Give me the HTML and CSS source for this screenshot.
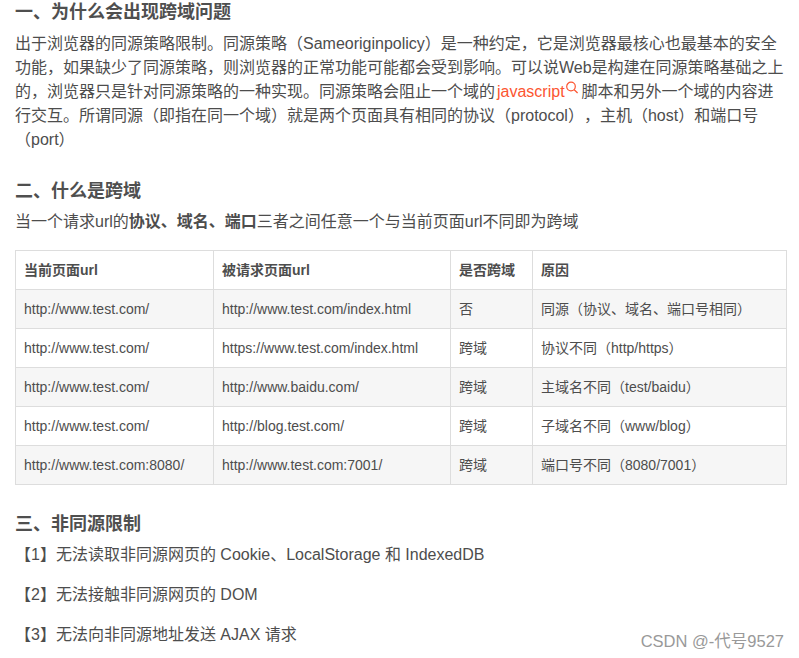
FILE: index.html
```html
<!DOCTYPE html>
<html lang="zh-CN">
<head>
<meta charset="utf-8">
<title>跨域</title>
<link rel="stylesheet" href="styles.css">
</head>
<body>
<main class="article">
<h2 class="heading first">一、为什么会出现跨域问题</h2>
<p class="text intro">出于浏览器的同源策略限制。同源策略（Sameoriginpolicy）是一种约定，它是浏览器最核心也最基本的安全功能，如果缺少了同源策略，则浏览器的正常功能可能都会受到影响。可以说Web是构建在同源策略基础之上的，浏览器只是针对同源策略的一种实现。同源策略会阻止一个域的<a class="keyword">javascript<svg class="search" width="14" height="14" viewBox="0 0 14 14" aria-hidden="true"><circle cx="6" cy="5.5" r="4.3"/><path d="M9.2 8.7 12.6 12"/></svg></a>脚本和另外一个域的内容进行交互。所谓同源（即指在同一个域）就是两个页面具有相同的协议（protocol），主机（host）和端口号（port）</p>
<h2 class="heading second">二、什么是跨域</h2>
<p class="text">当一个请求url的<strong>协议、域名、端口</strong>三者之间任意一个与当前页面url不同即为跨域</p>
<table class="table">
<colgroup><col class="c1"><col class="c2"><col class="c3"><col class="c4"></colgroup>
<thead>
<tr><th>当前页面url</th><th>被请求页面url</th><th>是否跨域</th><th>原因</th></tr>
</thead>
<tbody>
<tr><td>http://www.test.com/</td><td>http://www.test.com/index.html</td><td>否</td><td>同源（协议、域名、端口号相同）</td></tr>
<tr><td>http://www.test.com/</td><td>https://www.test.com/index.html</td><td>跨域</td><td>协议不同（http/https）</td></tr>
<tr><td>http://www.test.com/</td><td>http://www.baidu.com/</td><td>跨域</td><td>主域名不同（test/baidu）</td></tr>
<tr><td>http://www.test.com/</td><td>http://blog.test.com/</td><td>跨域</td><td>子域名不同（www/blog）</td></tr>
<tr><td>http://www.test.com:8080/</td><td>http://www.test.com:7001/</td><td>跨域</td><td>端口号不同（8080/7001）</td></tr>
</tbody>
</table>
<h2 class="heading third">三、非同源限制</h2>
<p class="text item">【1】无法读取非同源网页的 Cookie、LocalStorage 和 IndexedDB</p>
<p class="text item">【2】无法接触非同源网页的 DOM</p>
<p class="text item">【3】无法向非同源地址发送 AJAX 请求</p>
</main>
<div class="watermark">CSDN @-代号9527</div>
</body>
</html>
```
FILE: styles.css
```css
* { box-sizing: border-box; }
html, body { margin: 0; padding: 0; height: 658px; overflow: hidden; background: #fff; }
body {
  position: relative;
  font-family: "Liberation Sans", "Noto Sans CJK SC", sans-serif;
  color: #4d4d4d;
  font-size: 16px;
  line-height: 24px;
  text-spacing-trim: space-all;
}
.article { padding: 0 12px 0 15px; }
.heading { margin: 0; font-size: 18px; line-height: 24px; font-weight: 700; color: #4f4f4f; }
.first { margin-top: 0; }
.second { margin-top: 27px; }
.third { margin-top: 27px; }
.text { margin: 7px 0 0; }
.intro { margin-top: 8px; }
.item { margin: 0 0 16px; }
.heading + .item { margin-top: 7px; }
.keyword { color: #fc5531; margin: 0 3px 0 2px; }
.search { fill: none; stroke: #fc5531; stroke-width: 1.2; vertical-align: 2px; }
.table { width: 771px; margin-top: 16px; border-collapse: collapse; table-layout: fixed; font-size: 14px; line-height: 22px; }
.c1 { width: 198px; }
.c2 { width: 237px; }
.c3 { width: 82px; }
.c4 { width: 254px; }
.table th, .table td { border: 1px solid #ddd; padding: 8px; height: 39px; text-align: left; font-weight: 400; white-space: nowrap; }
.table th { font-weight: 700; }
.table tbody tr:nth-child(odd) { background: #f6f6f6; }
.watermark { position: absolute; right: 15px; top: 629px; font-size: 16.5px; line-height: 24px; color: #999; }
```
